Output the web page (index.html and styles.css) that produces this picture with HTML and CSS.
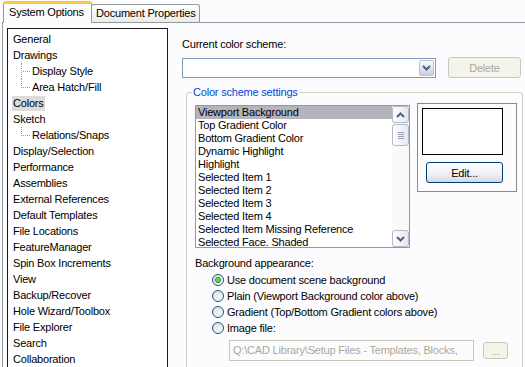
FILE: index.html
```html
<!DOCTYPE html>
<html lang="en">
<head>
    <meta charset="UTF-8">
    <title>System Options - Colors</title>
    <link rel="stylesheet" href="styles.css">
</head>
<body>
    <div class="tabs">
        <div class="tab active">System Options</div>
        <div class="tab">Document Properties</div>
    </div>

    <div class="panel">
        <div class="tree">
            <div class="tree-row"><span class="label">General</span></div>
            <div class="tree-row"><span class="label">Drawings</span></div>
            <div class="tree-row"><span class="elbow"></span><span class="label">Display Style</span></div>
            <div class="tree-row"><span class="elbow last"></span><span class="label">Area Hatch/Fill</span></div>
            <div class="tree-row"><span class="label selected">Colors</span></div>
            <div class="tree-row"><span class="label">Sketch</span></div>
            <div class="tree-row"><span class="elbow last"></span><span class="label">Relations/Snaps</span></div>
            <div class="tree-row"><span class="label">Display/Selection</span></div>
            <div class="tree-row"><span class="label">Performance</span></div>
            <div class="tree-row"><span class="label">Assemblies</span></div>
            <div class="tree-row"><span class="label">External References</span></div>
            <div class="tree-row"><span class="label">Default Templates</span></div>
            <div class="tree-row"><span class="label">File Locations</span></div>
            <div class="tree-row"><span class="label">FeatureManager</span></div>
            <div class="tree-row"><span class="label">Spin Box Increments</span></div>
            <div class="tree-row"><span class="label">View</span></div>
            <div class="tree-row"><span class="label">Backup/Recover</span></div>
            <div class="tree-row"><span class="label">Hole Wizard/Toolbox</span></div>
            <div class="tree-row"><span class="label">File Explorer</span></div>
            <div class="tree-row"><span class="label">Search</span></div>
            <div class="tree-row"><span class="label">Collaboration</span></div>
        </div>

        <div class="settings">
            <div class="caption">Current color scheme:</div>
            <div class="scheme-row">
                <div class="combo">
                    <div class="combo-text"></div>
                    <div class="combo-btn">
                        <svg width="9" height="6" viewBox="0 0 9 6"><path d="M1 1 L4.5 4.5 L8 1" fill="none" stroke="#4d6185" stroke-width="2"/></svg>
                    </div>
                </div>
                <div class="btn disabled delete">Delete</div>
            </div>

            <fieldset class="group">
                <legend>Color scheme settings</legend>
                <div class="group-top">
                    <div class="listbox">
                        <div class="list-items">
                            <div class="item selected">Viewport Background</div>
                            <div class="item">Top Gradient Color</div>
                            <div class="item">Bottom Gradient Color</div>
                            <div class="item">Dynamic Highlight</div>
                            <div class="item">Highlight</div>
                            <div class="item">Selected Item 1</div>
                            <div class="item">Selected Item 2</div>
                            <div class="item">Selected Item 3</div>
                            <div class="item">Selected Item 4</div>
                            <div class="item">Selected Item Missing Reference</div>
                            <div class="item">Selected Face. Shaded</div>
                        </div>
                        <div class="scrollbar">
                            <div class="sb-btn">
                                <svg width="9" height="6" viewBox="0 0 9 6"><path d="M1 5 L4.5 1.5 L8 5" fill="none" stroke="#4d6185" stroke-width="2"/></svg>
                            </div>
                            <div class="sb-track">
                                <div class="sb-thumb"><span></span><span></span><span></span><span></span></div>
                            </div>
                            <div class="sb-btn">
                                <svg width="9" height="6" viewBox="0 0 9 6"><path d="M1 1 L4.5 4.5 L8 1" fill="none" stroke="#4d6185" stroke-width="2"/></svg>
                            </div>
                        </div>
                    </div>
                    <div class="preview">
                        <div class="swatch"></div>
                        <div class="btn edit">Edit...</div>
                    </div>
                </div>

                <div class="bg-caption">Background appearance:</div>
                <div class="radios">
                    <div class="radio-row"><span class="radio checked"></span>Use document scene background</div>
                    <div class="radio-row"><span class="radio"></span>Plain (Viewport Background color above)</div>
                    <div class="radio-row"><span class="radio"></span>Gradient (Top/Bottom Gradient colors above)</div>
                    <div class="radio-row"><span class="radio"></span>Image file:</div>
                </div>
                <div class="file-row">
                    <div class="textbox disabled">Q:\CAD Library\Setup Files - Templates, Blocks,</div>
                    <div class="btn disabled browse">...</div>
                </div>
            </fieldset>
        </div>
    </div>
</body>
</html>
```

FILE: styles.css
```css
body {
    margin: 0;
    width: 525px;
    height: 367px;
    overflow: hidden;
    background-color: #fcfcfe;
    color: #000;
    font-family: "Liberation Sans", Arial, sans-serif;
    font-size: 11px;
    letter-spacing: -0.2px;
}

.tabs {
    display: flex;
    align-items: flex-end;
    height: 22px;
    padding-left: 3px;
}

.tab {
    box-sizing: border-box;
    height: 18px;
    padding: 2px 6px 0 6px;
    border: 1px solid #919b9c;
    border-bottom: none;
    border-radius: 3px 3px 0 0;
    background: linear-gradient(#ffffff, #ecebe6);
    white-space: nowrap;
}

.tab.active {
    height: 22px;
    width: 89px;
    padding: 2px 0 0 5px;
    margin-bottom: -1px;
    background: #fcfcfe;
    border-top: 3px solid #ffc83c;
    position: relative;
    z-index: 1;
}

.tab + .tab {
    width: 109px;
    margin-left: -1px;
    padding-left: 4px;
}

.panel {
    display: flex;
    margin-left: 2px;
    border-top: 1px solid #919b9c;
    border-left: 1px solid #919b9c;
    padding: 5px 0 0 4px;
}

/* tree */

.tree {
    box-sizing: border-box;
    width: 161px;
    height: 400px;
    flex-shrink: 0;
    background: #fff;
    border: 1px solid #1a1a1a;
    padding-top: 2px;
}

.tree-row {
    display: flex;
    align-items: center;
    height: 16px;
}

.label {
    margin-left: 4px;
    padding: 1px 1px;
    line-height: 13px;
    white-space: nowrap;
}

.label.selected {
    background: #dcdcde;
}

.elbow {
    box-sizing: border-box;
    width: 10px;
    height: 16px;
    margin-left: 13px;
    margin-right: -4px;
    border-left: 1px dotted #9a9a9a;
    background: repeating-linear-gradient(to right, #9a9a9a 0 1px, transparent 1px 2px) no-repeat 1px 8px / 100% 1px;
}

.elbow.last {
    align-self: flex-start;
    height: 9px;
    background-position: 1px 8px;
}

/* right side */

.settings {
    flex: 1;
    display: flex;
    flex-direction: column;
    padding: 10px 0 0 14px;
}

.caption {
    line-height: 13px;
    margin-bottom: 6px;
}

.scheme-row {
    display: flex;
    align-items: flex-start;
    gap: 12px;
    padding-right: 5px;
}

.combo {
    box-sizing: border-box;
    display: flex;
    width: 254px;
    height: 20px;
    margin-top: 1px;
    background: #fff;
    border: 1px solid #7f9db9;
    padding: 1px;
}

.combo-text {
    flex: 1;
}

.combo-btn {
    box-sizing: border-box;
    width: 15px;
    display: flex;
    align-items: center;
    justify-content: center;
    border: 1px solid #bac3d9;
    border-radius: 2px;
    background: linear-gradient(#f8f9fc, #c9d0e2);
}

.btn {
    box-sizing: border-box;
    display: flex;
    align-items: center;
    justify-content: center;
    border: 1px solid #003c74;
    border-radius: 3px;
    background: linear-gradient(#ffffff 0%, #f0f0f6 60%, #d6d6e4 100%);
}

.btn.disabled {
    color: #aca899;
    border-color: #c9c7ba;
    background: #f5f4ea;
}

.delete {
    width: 73px;
    height: 21px;
}

.group {
    margin: 8px 3px 0 4px;
    padding: 0 0 10px 8px;
    border: 1px solid #d0d0bf;
    border-radius: 3px;
}

.group legend {
    margin-left: -3px;
    padding: 0 1px;
    color: #0046d5;
    line-height: 13px;
}

.group-top {
    display: flex;
    align-items: flex-start;
    gap: 7px;
    margin-top: 6px;
}

.listbox {
    box-sizing: border-box;
    display: flex;
    width: 215px;
    height: 143px;
    background: #fff;
    border: 1px solid #7f9db9;
}

.list-items {
    flex: 1;
    overflow: hidden;
}

.item {
    height: 13px;
    line-height: 13px;
    padding-left: 2px;
    white-space: nowrap;
}

.item.selected {
    background: #b4b4bc;
}

.scrollbar {
    width: 17px;
    display: flex;
    flex-direction: column;
    background: #fafaf8;
}

.sb-btn,
.sb-thumb {
    box-sizing: border-box;
    display: flex;
    align-items: center;
    justify-content: center;
    height: 17px;
    border: 1px solid #b4b9c8;
    border-radius: 3px;
    background: linear-gradient(to right, #ffffff, #e6e7ee);
}

.sb-track {
    flex: 1;
    padding-top: 1px;
}

.sb-thumb {
    flex-direction: column;
    gap: 1px;
    height: 22px;
}

.sb-thumb span {
    display: block;
    width: 6px;
    height: 1px;
    background: #9aa0b4;
}

.preview {
    box-sizing: border-box;
    width: 100px;
    height: 89px;
    margin-top: -2px;
    border: 1px solid #8a8a8a;
    padding: 4px 0 0 4px;
}

.swatch {
    box-sizing: border-box;
    width: 81px;
    height: 47px;
    background: #fff;
    border: 1px solid #000;
}

.edit {
    width: 77px;
    height: 21px;
    margin: 7px 0 0 4px;
}

.bg-caption {
    line-height: 16px;
    margin-top: 7px;
}

.radios {
    padding-left: 17px;
    margin-top: 1px;
}

.radio-row {
    display: flex;
    align-items: center;
    gap: 3px;
    height: 16px;
}

.radio {
    box-sizing: border-box;
    width: 12px;
    height: 12px;
    border: 1px solid #1c5180;
    border-radius: 50%;
    background: linear-gradient(135deg, #dcdcd7, #ffffff);
}

.radio.checked {
    background: radial-gradient(circle, #5fd35f 0 1.5px, #21a121 2.5px, transparent 3.5px), linear-gradient(135deg, #dcdcd7, #ffffff);
}

.file-row {
    display: flex;
    align-items: center;
    gap: 9px;
    margin: 4px 0 0 34px;
}

.textbox {
    box-sizing: border-box;
    width: 245px;
    height: 21px;
    line-height: 19px;
    padding-left: 3px;
    white-space: nowrap;
    overflow: hidden;
    border: 1px solid #c9c7ba;
    background: #fcfcfe;
}

.textbox.disabled {
    color: #aca899;
}

.browse {
    width: 25px;
    height: 17px;
}
```
